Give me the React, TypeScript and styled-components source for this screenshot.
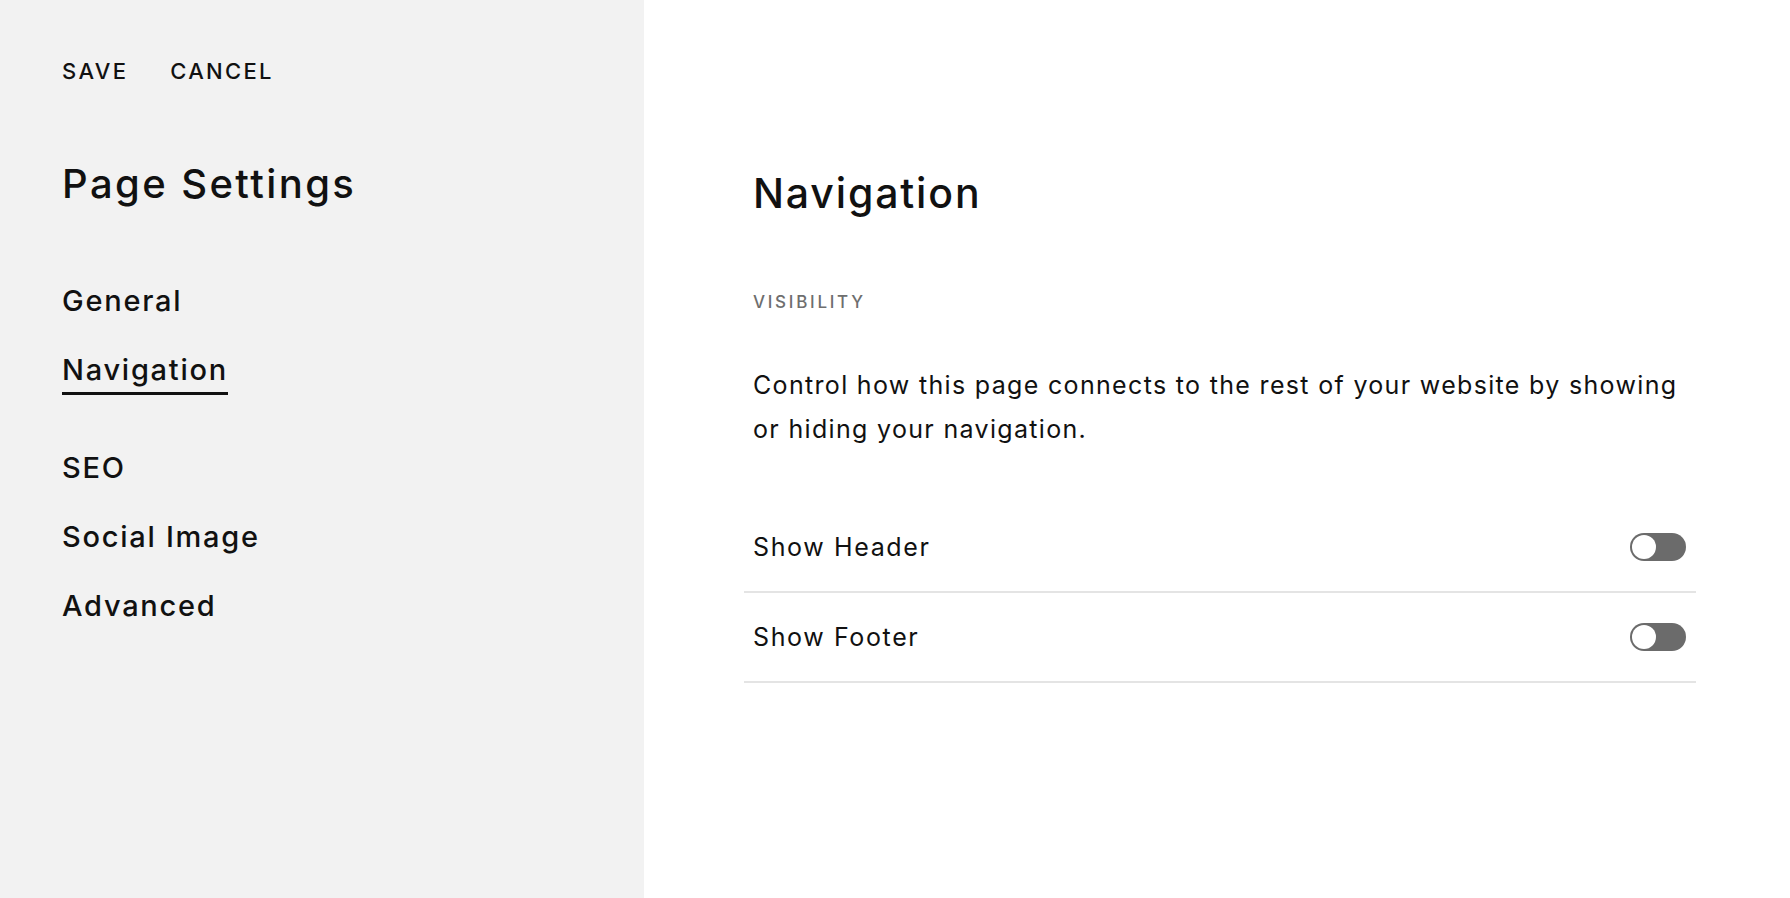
import React, { useState } from "react";
import styled, { createGlobalStyle } from "styled-components";

const Global = createGlobalStyle`
  html, body { margin: 0; padding: 0; }
  body {
    font-family: Inter, "Noto Sans", Arial, sans-serif;
    color: #111111;
    background: #ffffff;
    -webkit-font-smoothing: antialiased;
  }
  * { box-sizing: border-box; }
`;

const Shell = styled.div`
  display: flex;
  width: 100%;
  height: 100vh;
  min-height: 898px;
`;

const Sidebar = styled.aside`
  width: 644px;
  flex: 0 0 644px;
  background: #f2f2f2;
  padding: 59px 0 0 62px;
  display: flex;
  flex-direction: column;
`;

const ActionBar = styled.div`
  display: flex;
  gap: 42px;
`;

const ActionButton = styled.button`
  appearance: none;
  border: 0;
  background: none;
  padding: 0;
  font-family: inherit;
  font-size: 22px;
  line-height: 24px;
  font-weight: 500;
  letter-spacing: 0.105em;
  color: #111111;
  cursor: pointer;
`;

const SidebarTitle = styled.h1`
  margin: 77px 0 0;
  font-size: 40px;
  line-height: 48px;
  font-weight: 500;
  letter-spacing: 0.06em;
`;

const NavList = styled.nav`
  margin-top: 75px;
  display: flex;
  flex-direction: column;
  align-items: flex-start;
`;

const NavItem = styled.a<{ $active?: boolean }>`
  display: block;
  font-size: 29px;
  line-height: 36px;
  font-weight: 500;
  letter-spacing: 0.06em;
  color: #111111;
  text-decoration: none;
  cursor: pointer;
  margin-bottom: ${(p) => (p.$active ? "55px" : "33px")};
  padding-bottom: ${(p) => (p.$active ? "4px" : "0")};
  border-bottom: ${(p) => (p.$active ? "3px solid #111111" : "0")};
`;

const Main = styled.main`
  flex: 1;
  padding: 169px 0 0 109px;
`;

const Content = styled.div`
  width: 934px;
`;

const Heading = styled.h2`
  margin: 0;
  font-size: 41px;
  line-height: 48px;
  font-weight: 500;
  letter-spacing: 0.045em;
`;

const SectionLabel = styled.div`
  margin-top: 75px;
  font-size: 17px;
  line-height: 20px;
  font-weight: 500;
  letter-spacing: 0.16em;
  color: #6e6e6e;
`;

const Description = styled.p`
  margin: 51px 0 0;
  font-size: 25px;
  line-height: 44px;
  font-weight: 400;
  letter-spacing: 0.053em;
  max-width: 934px;
`;

const Rows = styled.div`
  margin: 52px 0 0 -9px;
  width: 952px;
`;

const Row = styled.div`
  display: flex;
  align-items: center;
  justify-content: space-between;
  height: 90px;
  padding: 0 10px 0 9px;
  border-bottom: 2px solid #e4e4e4;
`;

const RowLabel = styled.span`
  font-size: 25px;
  line-height: 32px;
  letter-spacing: 0.065em;
`;

const Track = styled.button<{ $on: boolean }>`
  appearance: none;
  border: 0;
  padding: 2px;
  width: 56px;
  height: 28px;
  border-radius: 14px;
  background: ${(p) => (p.$on ? "#111111" : "#6b6b6b")};
  display: flex;
  justify-content: ${(p) => (p.$on ? "flex-end" : "flex-start")};
  cursor: pointer;
`;

const Knob = styled.span`
  width: 24px;
  height: 24px;
  border-radius: 50%;
  background: #ffffff;
`;

const Toggle: React.FC<{ on: boolean; onClick: () => void }> = ({ on, onClick }) => (
  <Track $on={on} onClick={onClick} aria-pressed={on}>
    <Knob />
  </Track>
);

export default function App() {
  const [header, setHeader] = useState(false);
  const [footer, setFooter] = useState(false);
  const items = ["General", "Navigation", "SEO", "Social Image", "Advanced"];
  return (
    <>
      <Global />
      <Shell>
        <Sidebar>
          <ActionBar>
            <ActionButton>SAVE</ActionButton>
            <ActionButton>CANCEL</ActionButton>
          </ActionBar>
          <SidebarTitle>Page Settings</SidebarTitle>
          <NavList>
            {items.map((it) => (
              <NavItem key={it} $active={it === "Navigation"}>
                {it}
              </NavItem>
            ))}
          </NavList>
        </Sidebar>
        <Main>
          <Content>
            <Heading>Navigation</Heading>
            <SectionLabel>VISIBILITY</SectionLabel>
            <Description>
              Control how this page connects to the rest of your website by showing or hiding your navigation.
            </Description>
            <Rows>
              <Row>
                <RowLabel>Show Header</RowLabel>
                <Toggle on={header} onClick={() => setHeader(!header)} />
              </Row>
              <Row>
                <RowLabel>Show Footer</RowLabel>
                <Toggle on={footer} onClick={() => setFooter(!footer)} />
              </Row>
            </Rows>
          </Content>
        </Main>
      </Shell>
    </>
  );
}
